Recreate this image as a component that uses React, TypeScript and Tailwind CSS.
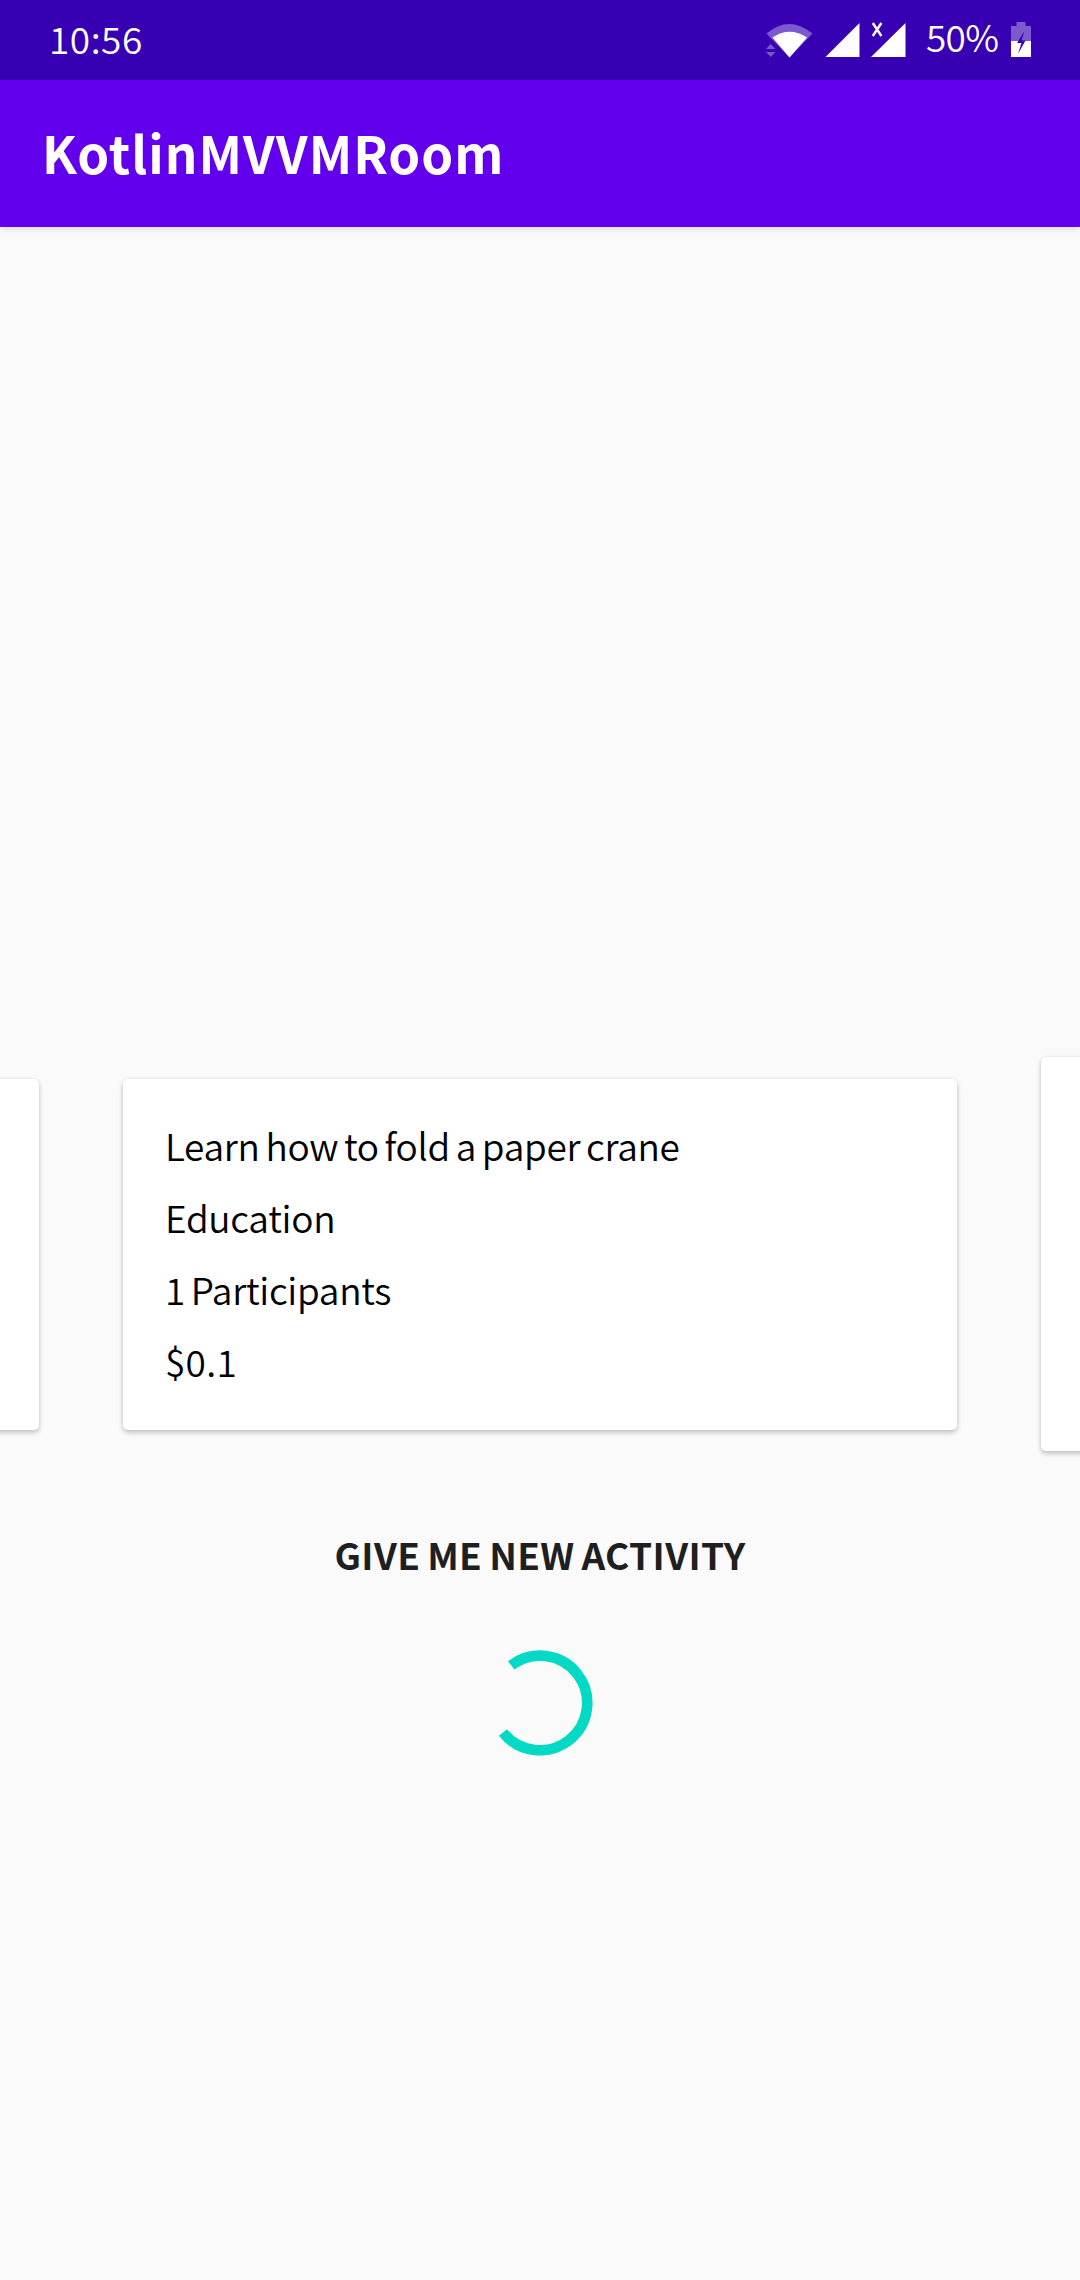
const activity = ["Learn how to fold a paper crane", "Education", "1 Participants"];

const cardStyle =
  "shrink-0 rounded-[5px] bg-white shadow-[0_3px_5px_rgba(0,0,0,0.2),0_0_4px_rgba(0,0,0,0.08)]";

function StatusIcons() {
  return (
    <svg width="184" height="80" viewBox="764 0 184 80" className="block w-[184px]" fill="#fff">
      <path d="M766.5 33.5Q789 14.500 812.500 33.500L789.500 57.500Z" opacity=".35" />
      <path d="M772.500 37.500Q789.500 26 807 37.500L789.500 57.500Z" />
      <path d="M766 49l4.700-5 4.700 5zM766 52h9.400l-4.700 5z" opacity=".35" />
      <path d="M825.500 57L859.500 23V57Z" />
      <path d="M871 57L905.500 23V57Z" />
      <path d="M872.800 23L881.400 36M881.400 23L872.800 36" stroke="#fff" strokeWidth="2.400" />
    </svg>
  );
}

function Battery() {
  return (
    <svg width="22" height="36" viewBox="1010 22 22 36" className="block" fill="#fff">
      <path d="M1011 41V26h5.500v-4h9v4h5.500v15z" opacity=".35" />
      <path d="M1011 41h20v16h-20z" />
      <path d="M1024.500 31L1017 43h4.500L1018 54L1025.500 40.500h-4z" fill="#3700b3" />
    </svg>
  );
}

export default function App() {
  return (
    <div className="flex h-[2280px] w-[1080px] flex-col overflow-hidden bg-[#fafafa] font-['Noto_Sans_CJK_SC',sans-serif]">
      <div className="flex h-20 shrink-0 bg-[#3700b3] text-white">
        <span className="ml-[49px] w-[715px] text-[37px] font-[350] leading-[76px] tracking-[0.5px]">10:56</span>
        <StatusIcons />
        <div className="-ml-[22px] w-[84px] text-[37px] font-[350] leading-[72px] tracking-[-0.7px]">50%</div>
        <div className="pt-[22px]">
          <Battery />
        </div>
      </div>
      <header className="z-10 h-[147px] shrink-0 bg-[#6200ee] pl-[42px] text-white shadow-[0_2px_6px_rgba(0,0,0,0.14)]">
        <h1 className="text-[51px] font-bold leading-[145px] tracking-[1px]">KotlinMVVMRoom</h1>
      </header>
      <main className="flex flex-col items-center pt-[830px]">
        <div className="flex w-[1080px] items-center">
          <div className={`${cardStyle} -ml-3 h-[351px] w-[51px]`} />
          <section className={`${cardStyle} ml-[84px] h-[351px] w-[834px] pl-[42px] pt-[30px] text-[37px] font-[350] leading-[72px] text-black`}>
            {activity.map((line) => (
              <p key={line} className="tracking-[-0.3px] [word-spacing:-2.2px]">
                {line}
              </p>
            ))}
            <p className="tracking-[0.3px]">$0.1</p>
          </section>
          <div className={`${cardStyle} ml-[84px] h-[394px] w-[60px]`} />
        </div>
        <button className="mt-[67px] text-[37px] font-bold leading-[72px] tracking-[0.35px] text-[#1f1f1f] [word-spacing:-1.8px]">
          GIVE ME NEW ACTIVITY
        </button>
        <svg width="120" height="120" viewBox="-60 -60 120 120" className="mt-[53px]">
          <path d="M-28.800-37.600A47.300 47.300 0 1 1-37 29.500" fill="none" stroke="#03dac5" strokeWidth="10.600" />
        </svg>
      </main>
    </div>
  );
}
